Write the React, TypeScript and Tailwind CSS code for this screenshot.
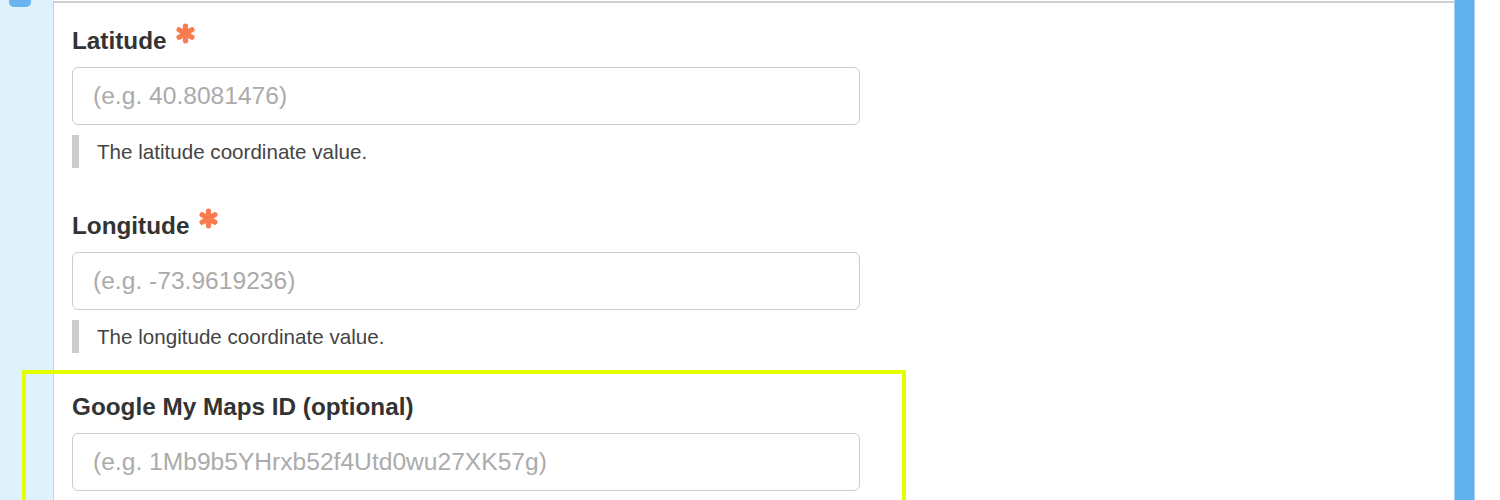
import React from "react";

const Asterisk = () => (
  <svg width="21" height="21" viewBox="0 0 20 20" className="ml-[9px] self-start -mt-[4px]">
    <g stroke="#fb7b50" strokeWidth="5" strokeLinecap="round">
      <line x1="10" y1="3" x2="10" y2="17" />
      <line x1="3.9" y1="6.5" x2="16.1" y2="13.5" />
      <line x1="3.9" y1="13.5" x2="16.1" y2="6.5" />
    </g>
  </svg>
);

function Field({
  label,
  required,
  placeholder,
  help,
  mt,
}: {
  label: string;
  required?: boolean;
  placeholder: string;
  help?: string;
  mt: string;
}) {
  return (
    <div className={mt}>
      <div className="flex items-start h-[28px]">
        <span className="text-[24.3px] leading-[28px] font-bold text-[#333333]">{label}</span>
        {required && <Asterisk />}
      </div>
      <div className="mt-[12px] w-[788px] h-[58px] border border-[#cccccc] rounded-[6px] bg-white flex items-center pl-[20px]">
        <span className="text-[24.6px] leading-[28px] text-[#ababab]">{placeholder}</span>
      </div>
      {help && (
        <div className="mt-[10px] flex h-[33px] items-stretch">
          <div className="w-[7px] bg-[#cccccc]" />
          <span className="ml-[18px] text-[20.6px] leading-[33px] text-[#444444]">{help}</span>
        </div>
      )}
    </div>
  );
}

export default function App() {
  return (
    <div
      className="relative flex w-[1500px] h-[500px] overflow-hidden bg-white"
      style={{ fontFamily: '"Liberation Sans", Arial, Helvetica, sans-serif' }}
    >
      <div className="w-[53px] shrink-0 bg-[#dff1fb] relative">
        <div className="ml-[9px] w-[22px] h-[7px] rounded-b-[5px] bg-[#6ab3ee]" />
      </div>
      <div className="flex-1 mt-[1px] border-t-2 border-l border-[#d0d0d0] bg-white pl-[18px]">
        <Field mt="mt-[24px]" label="Latitude" required placeholder="(e.g. 40.8081476)" help="The latitude coordinate value." />
        <Field mt="mt-[44px]" label="Longitude" required placeholder="(e.g. -73.9619236)" help="The longitude coordinate value." />
        <Field mt="mt-[40px]" label="Google My Maps ID (optional)" placeholder="(e.g. 1Mb9b5YHrxb52f4Utd0wu27XK57g)" />
      </div>
      <div className="w-[21px] shrink-0 bg-[#62b1ef] border-l border-r border-[#a3d2f6]" />
      <div className="w-[25px] shrink-0 bg-white" />
      <div className="absolute left-[22px] top-[370px] w-[884px] h-[160px] border-[4px] border-[#e4ff00]" />
    </div>
  );
}
